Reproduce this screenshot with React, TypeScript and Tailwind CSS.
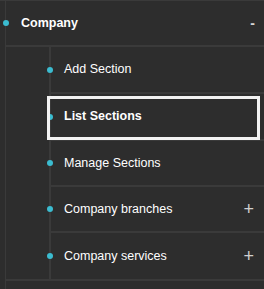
import React from "react";

const Dot = ({ cls }: { cls: string }) => (
  <span className={`absolute w-[6px] h-[6px] rounded-full bg-[#3bbcd0] top-1/2 -translate-y-1/2 ${cls}`} />
);

type Item = { label: string; h: string; border: boolean; plus?: boolean; active?: boolean };

const items: Item[] = [
  { label: "Add Section", h: "h-[47px]", border: true },
  { label: "List Sections", h: "h-[47px]", border: true, active: true },
  { label: "Manage Sections", h: "h-[46px]", border: true },
  { label: "Company branches", h: "h-[46px]", border: true, plus: true },
  { label: "Company services", h: "h-[46px]", border: false, plus: true },
];

export default function App() {
  return (
    <div className="w-[264px] h-[289px] bg-[#2d2d2d] border-t border-[#3a3a3a] overflow-hidden font-['Liberation_Sans',Arial,sans-serif]">
      <div className="ml-[5px] h-full border-l border-[#3a3a3a]">
        <div className="relative flex items-center h-[46px] border-b-2 border-[#3a3a3a] pl-[15px] pr-[9px]">
          <Dot cls="left-[-3px]" />
          <span className="text-white font-bold text-[12.5px]">Company</span>
          <span className="ml-auto text-[#d6d6d6] font-bold text-[14px] leading-none">-</span>
        </div>
        <div className="border-b-2 border-[#3a3a3a]">
          <div className="ml-[43px] border-l-2 border-[#3a3a3a]">
            {items.map((it) => (
              <div
                key={it.label}
                className={`relative flex items-center ${it.h} pl-[13px] pr-[10px] ${it.border ? "border-b-2 border-[#3a3a3a]" : ""}`}
              >
                <Dot cls="left-[-4px]" />
                <span className={`text-white text-[12.5px] ${it.active ? "font-bold" : ""}`}>{it.label}</span>
                {it.plus && <span className="ml-auto text-[#cfcfcf] text-[18px] leading-none">+</span>}
                {it.active && (
                  <span className="absolute left-[-4px] right-[4px] top-[2px] bottom-[-1px] border-[3px] border-[#f2f2f2]" />
                )}
              </div>
            ))}
          </div>
        </div>
      </div>
    </div>
  );
}
